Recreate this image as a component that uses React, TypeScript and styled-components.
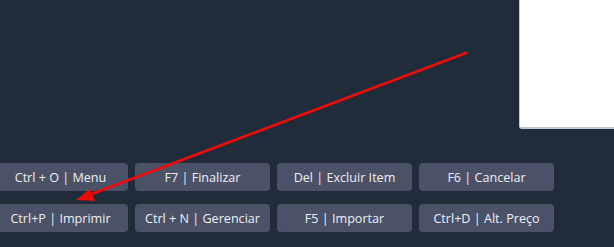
import styled, { createGlobalStyle } from 'styled-components';

const GlobalStyle = createGlobalStyle`
  html, body {
    margin: 0;
    padding: 0;
    background: #212c3b;
    overflow: hidden;
  }
  body {
    font-family: "Open Sans", "Noto Sans", sans-serif;
  }
`;

const shortcuts = [
  'Ctrl + O | Menu',
  'F7 | Finalizar',
  'Del | Excluir Item',
  'F6 | Cancelar',
  'Ctrl+P | Imprimir',
  'Ctrl + N | Gerenciar',
  'F5 | Importar',
  'Ctrl+D | Alt. Preço',
];

const App = () => {
  return (
    <Page>
      <GlobalStyle />
      <TopArea>
        <Preview />
      </TopArea>
      <ShortcutGrid>
        {shortcuts.map((label) => (
          <ShortcutButton key={label}>{label}</ShortcutButton>
        ))}
      </ShortcutGrid>
      <Arrow width="614" height="247" viewBox="0 0 614 247">
        <line x1="466" y1="53" x2="89" y2="195" stroke="#f00a0a" strokeWidth="2.8" strokeLinecap="round" />
        <polygon points="76,200 90,189 95,201" fill="#f00a0a" />
      </Arrow>
    </Page>
  );
};

const Page = styled.div`
  position: relative;
  width: 614px;
  height: 247px;
  background: #212c3b;
  overflow: hidden;
`;

const TopArea = styled.div`
  display: flex;
  justify-content: flex-end;
`;

const Preview = styled.div`
  width: 94px;
  height: 127px;
  background: #ffffff;
  border-left: 1px solid #c3c8d0;
  border-bottom: 2px solid #c3c8d0;
  border-bottom-left-radius: 3px;
`;

const ShortcutGrid = styled.div`
  display: grid;
  grid-template-columns: repeat(4, 135px);
  grid-auto-rows: 28px;
  column-gap: 7px;
  row-gap: 13px;
  margin-top: 34px;
  margin-left: -7px;
`;

const ShortcutButton = styled.button`
  display: flex;
  align-items: center;
  justify-content: center;
  padding: 0;
  border: none;
  border-radius: 4px;
  background: #4b5167;
  color: #eef0f4;
  font-family: "Open Sans", "Noto Sans", sans-serif;
  font-size: 12.6px;
  white-space: nowrap;
  cursor: pointer;
`;

const Arrow = styled.svg`
  position: absolute;
  top: 0;
  left: 0;
  pointer-events: none;
`;

export default App;
